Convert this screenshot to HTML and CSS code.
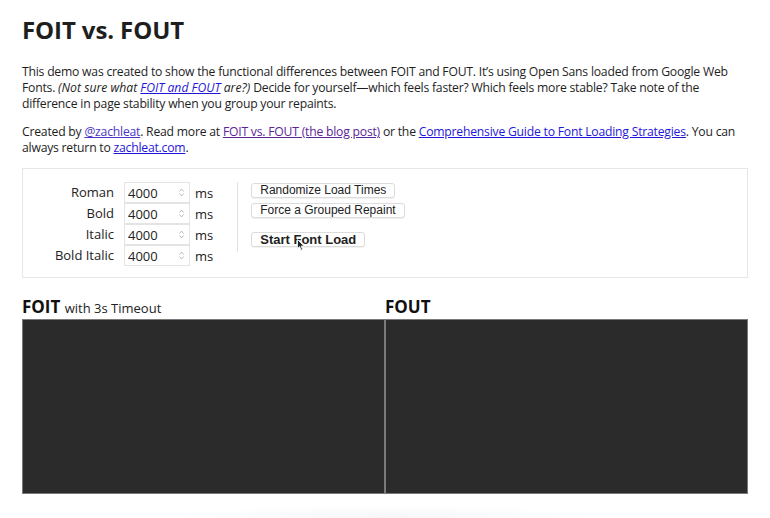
FILE: index.html
```html
<!DOCTYPE html>
<html lang="en">
<head>
<meta charset="utf-8">
<title>FOIT vs. FOUT</title>
<link rel="stylesheet" href="styles.css">
</head>
<body>
<h1 class="title">FOIT vs. FOUT</h1>
<p class="intro">This demo was created to show the functional differences between FOIT and FOUT. It’s using Open Sans loaded from Google Web Fonts. <em>(Not sure what <a class="link" href="#">FOIT and FOUT</a> are?)</em> Decide for yourself—which feels faster? Which feels more stable? Take note of the difference in page stability when you group your repaints.</p>
<p class="intro">Created by <a class="link link-mid" href="#">@zachleat</a>. Read more at <a class="link link-visited" href="#">FOIT vs. FOUT (the blog post)</a> or the <a class="link" href="#">Comprehensive Guide to Font Loading Strategies</a>. You can always return to <a class="link" href="#">zachleat.com</a>.</p>

<div class="controls">
  <div class="timings">
    <label class="t-label">Roman</label>
    <div class="t-input"><input class="t-field" type="text" value="4000"><svg class="spin" width="5" height="9" viewBox="0 0 5 9"><path d="M0.5 3.5 L2.5 1 L4.5 3.5 M0.5 5.5 L2.5 8 L4.5 5.5" fill="none" stroke="#bbb" stroke-width="1"/></svg></div>
    <span class="t-unit">ms</span>
    <label class="t-label">Bold</label>
    <div class="t-input"><input class="t-field" type="text" value="4000"><svg class="spin" width="5" height="9" viewBox="0 0 5 9"><path d="M0.5 3.5 L2.5 1 L4.5 3.5 M0.5 5.5 L2.5 8 L4.5 5.5" fill="none" stroke="#bbb" stroke-width="1"/></svg></div>
    <span class="t-unit">ms</span>
    <label class="t-label">Italic</label>
    <div class="t-input"><input class="t-field" type="text" value="4000"><svg class="spin" width="5" height="9" viewBox="0 0 5 9"><path d="M0.5 3.5 L2.5 1 L4.5 3.5 M0.5 5.5 L2.5 8 L4.5 5.5" fill="none" stroke="#bbb" stroke-width="1"/></svg></div>
    <span class="t-unit">ms</span>
    <label class="t-label">Bold Italic</label>
    <div class="t-input"><input class="t-field" type="text" value="4000"><svg class="spin" width="5" height="9" viewBox="0 0 5 9"><path d="M0.5 3.5 L2.5 1 L4.5 3.5 M0.5 5.5 L2.5 8 L4.5 5.5" fill="none" stroke="#bbb" stroke-width="1"/></svg></div>
    <span class="t-unit">ms</span>
  </div>
  <div class="actions">
    <button class="btn" type="button">Randomize Load Times</button>
    <button class="btn" type="button">Force a Grouped Repaint</button>
    <button class="btn btn-start" type="button">Start Font Load<svg class="cursor" width="8" height="12" viewBox="0 0 8 12"><path d="M0.5 0.5 L0.5 9.5 L2.6 7.6 L4.2 11.2 L5.6 10.6 L4.1 7.1 L7 7.1 Z" fill="#222" stroke="#fff" stroke-width="0.8"/></svg></button>
  </div>
</div>

<div class="demos">
  <section class="demo">
    <h2 class="demo-title">FOIT <span class="demo-sub">with 3s Timeout</span></h2>
    <div class="stage"></div>
  </section>
  <section class="demo">
    <h2 class="demo-title">FOUT</h2>
    <div class="stage"></div>
  </section>
</div>
<div class="glow"></div>
</body>
</html>
```

FILE: styles.css
```css
html, body {
  background: #fff;
}
body {
  margin: 0;
  padding: 14px 22px 0 22px;
  font-family: "Open Sans", "Liberation Sans", sans-serif;
  color: #1e1e1e;
  overflow: hidden;
  height: 518px;
  box-sizing: border-box;
  position: relative;
}
.title {
  font-size: 24px;
  font-weight: 700;
  line-height: 32px;
  margin: 0 0 18px 0;
  letter-spacing: -0.1px;
}
.intro {
  font-size: 12.2px;
  line-height: 16px;
  letter-spacing: -0.22px;
  margin: 0 0 12px 0;
}
.intro em {
  font-style: italic;
  letter-spacing: 0;
}
.link {
  color: #1f17d8;
  text-decoration: underline;
}
.link-mid {
  color: #4a35c8;
}
.link-visited {
  color: #5b2596;
}
.controls {
  margin-top: 12px;
  border: 1px solid #e6e6e6;
  display: flex;
  align-items: flex-start;
  padding: 13px 12px 10px 21px;
  height: 110px;
  box-sizing: border-box;
}
.timings {
  display: grid;
  grid-template-columns: 80px 66px auto;
  grid-auto-rows: 21px;
  align-items: center;
  padding-right: 24px;
}
.t-label {
  font-size: 13px;
  text-align: right;
  padding-right: 10px;
  line-height: 21px;
  color: #222;
}
.t-input {
  display: flex;
  align-items: center;
  height: 21px;
  border: 1px solid #e4e4e4;
  box-sizing: border-box;
  padding-right: 5px;
  background: #fff;
}
.t-field {
  border: 0;
  outline: none;
  width: 50px;
  padding: 0 0 0 3px;
  margin: 0;
  font-family: "Open Sans", "Liberation Sans", sans-serif;
  font-size: 13px;
  color: #222;
  background: transparent;
  flex: 1;
  min-width: 0;
}
.spin {
  display: block;
}
.t-unit {
  font-size: 13px;
  padding-left: 5px;
  color: #222;
}
.actions {
  border-left: 1px solid #e2e2e2;
  padding-left: 13px;
  height: 70px;
  display: flex;
  flex-direction: column;
  align-items: flex-start;
}
.btn {
  font-family: "Liberation Sans", Arial, sans-serif;
  font-size: 12px;
  line-height: 13px;
  color: #222;
  background: #fff;
  border: 1px solid #dcdcdc;
  border-radius: 3px;
  padding: 0 8px;
  height: 15px;
  margin: 0 0 5px 0;
  box-shadow: 0 1px 1px rgba(0,0,0,0.06);
  position: relative;
}
.btn:first-child {
  margin-top: 1px;
}
.btn-start {
  font-weight: 700;
  font-size: 13px;
  height: 17px;
  margin-top: 9px;
  padding: 0 8px;
}
.cursor {
  position: absolute;
  left: 45px;
  top: 6px;
}
.demos {
  display: flex;
  margin-top: 17px;
}
.demo {
  flex: 1 1 0;
  min-width: 0;
}
.demo-title {
  font-size: 17px;
  font-weight: 700;
  line-height: 24px;
  height: 24px;
  margin: 0;
  color: #111;
  white-space: nowrap;
}
.demo-sub {
  font-size: 13px;
  font-weight: 400;
  line-height: 1;
  color: #222;
}
.stage {
  height: 175px;
  background: #2b2b2b;
  border: 1px solid #7a7a7a;
  box-sizing: border-box;
}
.glow {
  position: absolute;
  left: 160px;
  right: 160px;
  bottom: -20px;
  height: 34px;
  background: radial-gradient(ellipse at center, rgba(0,0,0,0.04) 0%, rgba(0,0,0,0) 70%);
}
```
